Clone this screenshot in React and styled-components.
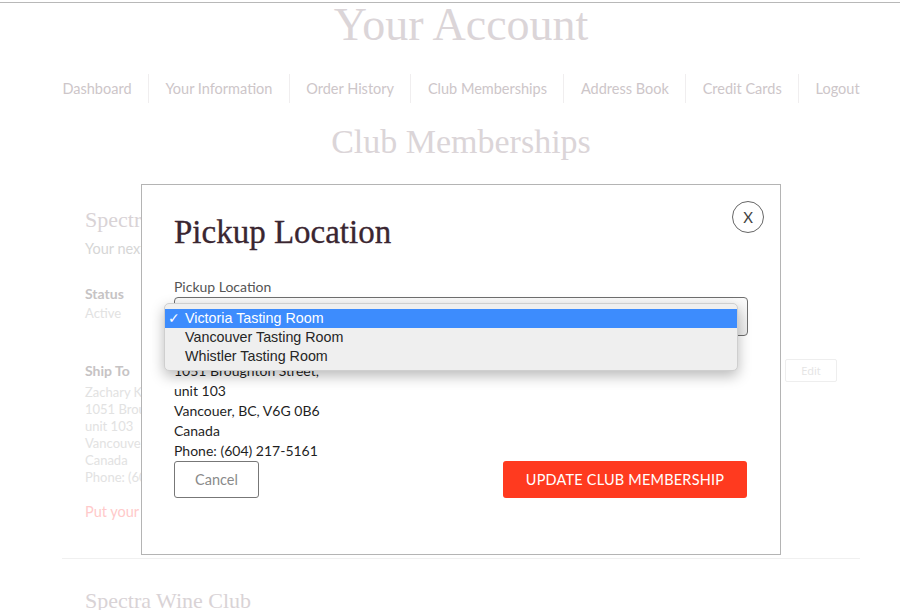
import React from "react";
import styled, { createGlobalStyle } from "styled-components";

const GlobalStyle = createGlobalStyle`
  html, body { margin: 0; padding: 0; background: #fff; }
  body { font-family: Lato, "Open Sans", sans-serif; }
  * { box-sizing: border-box; }
`;

const Page = styled.div`
  position: relative;
  width: 900px;
  height: 610px;
  overflow: hidden;
  padding-top: 2px;
`;

const TopRule = styled.div`
  height: 1px;
  background: #b8b8b8;
`;

const Container = styled.div`
  width: 798px;
  margin-left: 62px;
`;

const PageTitle = styled.h1`
  margin: 0;
  font-family: "Liberation Serif", serif;
  font-weight: 400;
  font-size: 46px;
  line-height: 44px;
  color: #dbd5d8;
  text-align: center;
`;

const Nav = styled.nav`
  display: flex;
  justify-content: space-between;
  margin-top: 27px;
  height: 29px;
`;

const NavItem = styled.a`
  display: flex;
  align-items: center;
  justify-content: center;
  flex: 1 1 auto;
  padding: 0 ${p => (p.$last ? "0" : "16px")} 0 ${p => (p.$first ? "0" : "16px")};
  border-left: ${p => (p.$first ? "none" : "1px solid #f0eeef")};
  font-size: 14.5px;
  color: #cdc6c9;
  white-space: nowrap;
`;

const SectionTitle = styled.h2`
  margin: 19px 0 0;
  font-family: "Liberation Serif", serif;
  font-weight: 400;
  font-size: 34px;
  line-height: 40px;
  color: #dbd5d8;
  text-align: center;
`;

const Card = styled.section`
  padding: ${p => p.$top ?? 45}px 23px 0;
`;

const ClubName = styled.h3`
  margin: 0;
  font-family: "Liberation Serif", serif;
  font-weight: 400;
  font-size: 22px;
  line-height: 26px;
  color: #d9d3d6;
`;

const Muted = styled.p`
  margin: ${p => p.$top ?? 6}px 0 0;
  font-size: 14.5px;
  line-height: 20px;
  color: ${p => p.$color || "#d6d6d6"};
`;

const InfoLabel = styled.div`
  margin-top: ${p => p.$top || 0}px;
  font-size: 14px;
  font-weight: 700;
  line-height: 20px;
  color: #c6c3c4;
`;

const InfoValue = styled.div`
  margin-top: ${p => p.$top || 0}px;
  font-size: 13px;
  line-height: 17px;
  color: #e2e2e2;
`;

const ShipRow = styled.div`
  display: flex;
  justify-content: space-between;
  align-items: flex-start;
  margin-top: 39px;
`;

const EditButton = styled.button`
  margin-top: -2px;
  width: 52px;
  height: 23px;
  border: 1px solid #eeeeee;
  border-radius: 2px;
  background: #fff;
  font-family: "Open Sans", sans-serif;
  font-size: 11px;
  color: #e4e4e4;
`;

const Divider = styled.hr`
  margin: 36px 0 0;
  border: 0;
  border-top: 1px solid #f0f0f0;
`;

/* ---------- Modal ---------- */

const Modal = styled.div`
  position: absolute;
  left: 141px;
  top: 184px;
  width: 640px;
  height: 371px;
  background: #fff;
  border: 1px solid #b4b4b4;
  padding: 27px 32px 0;
`;

const CloseButton = styled.button`
  position: absolute;
  top: 16px;
  right: 16px;
  width: 32px;
  height: 32px;
  border-radius: 50%;
  border: 1px solid #666;
  background: #fff;
  padding: 0;
  display: flex;
  align-items: center;
  justify-content: center;
  font-family: Lato, sans-serif;
  font-size: 15px;
  color: #444;
`;

const ModalTitle = styled.h2`
  margin: 0;
  font-family: "Liberation Serif", serif;
  font-weight: 400;
  font-size: 33px;
  line-height: 40px;
  color: #3a2631;
  -webkit-text-stroke: 0.3px #3a2631;
`;

const FieldLabel = styled.label`
  display: block;
  margin-top: 26px;
  font-size: 14px;
  line-height: 18px;
  color: #555;
`;

const FieldWrap = styled.div`
  position: relative;
  margin-top: 1px;
`;

const SelectBox = styled.div`
  height: 39px;
  border: 1px solid #6f6f6f;
  border-radius: 4px;
  background: linear-gradient(#fbfbfb, #ececec);
`;

const Popup = styled.ul`
  position: absolute;
  left: -10px;
  top: 6px;
  width: 574px;
  margin: 0;
  padding: 5px 0 4px;
  list-style: none;
  background: #efefef;
  border: 1px solid #cfcfcf;
  border-radius: 5px;
  box-shadow: 0 5px 14px rgba(0, 0, 0, 0.28);
  z-index: 2;
`;

const Option = styled.li`
  position: relative;
  height: 19px;
  padding-left: 20px;
  font-family: "Liberation Sans", Arial, sans-serif;
  font-size: 14.3px;
  line-height: 19px;
  color: ${p => (p.$selected ? "#fff" : "#262626")};
  background: ${p => (p.$selected ? "#3d8cfd" : "transparent")};
`;

const Check = styled.span`
  position: absolute;
  left: 3px;
  top: 0;
  font-family: "DejaVu Sans", sans-serif;
  font-size: 14px;
  font-weight: 700;
`;

const Address = styled.div`
  margin-top: 25px;
  font-size: 14px;
  line-height: 20px;
  color: #1f1f1f;
`;

const ButtonRow = styled.div`
  display: flex;
  justify-content: space-between;
  padding-right: 1px;
`;

const CancelButton = styled.button`
  width: 85px;
  height: 37px;
  border: 1px solid #777;
  border-radius: 3px;
  background: #fff;
  font-family: Lato, sans-serif;
  font-size: 14.5px;
  color: #8a8a8a;
`;

const PrimaryButton = styled.button`
  width: 244px;
  height: 37px;
  border: 0;
  border-radius: 3px;
  background: #ff3a1f;
  font-family: Lato, sans-serif;
  font-size: 14.5px;
  letter-spacing: 0.2px;
  color: #fff;
  text-transform: uppercase;
`;

const navItems = [
  "Dashboard",
  "Your Information",
  "Order History",
  "Club Memberships",
  "Address Book",
  "Credit Cards",
  "Logout",
];

const locations = ["Victoria Tasting Room", "Vancouver Tasting Room", "Whistler Tasting Room"];

export default function App() {
  return (
    <>
      <GlobalStyle />
      <Page>
        <TopRule />
        <Container>
          <PageTitle>Your Account</PageTitle>
          <Nav>
            {navItems.map((n, i) => (
              <NavItem key={n} $first={i === 0} $last={i === navItems.length - 1}>
                {n}
              </NavItem>
            ))}
          </Nav>
          <SectionTitle>Club Memberships</SectionTitle>
          <Card>
            <ClubName>Spectra Wine Club</ClubName>
            <Muted>Your next shipment is scheduled soon.</Muted>
            <InfoLabel $top={25}>Status</InfoLabel>
            <InfoValue $top={1}>Active</InfoValue>
            <ShipRow>
              <div>
                <InfoLabel>Ship To</InfoLabel>
                <InfoValue $top={3}>Zachary Kingston</InfoValue>
                <InfoValue>1051 Broughton Street,</InfoValue>
                <InfoValue>unit 103</InfoValue>
                <InfoValue>Vancouver, BC, V6G 0B6</InfoValue>
                <InfoValue>Canada</InfoValue>
                <InfoValue>Phone: (604) 217-5161</InfoValue>
                <Muted $color="#ffcaca" $top={16}>
                  Put your club membership on hold
                </Muted>
              </div>
              <EditButton>Edit</EditButton>
            </ShipRow>
          </Card>
          <Divider />
          <Card $top={29}>
            <ClubName>Spectra Wine Club</ClubName>
          </Card>
        </Container>

        <Modal>
          <CloseButton>X</CloseButton>
          <ModalTitle>Pickup Location</ModalTitle>
          <FieldLabel>Pickup Location</FieldLabel>
          <FieldWrap>
            <SelectBox />
            <Popup>
              {locations.map((l, i) => (
                <Option key={l} $selected={i === 0}>
                  {i === 0 && <Check>✓</Check>}
                  {l}
                </Option>
              ))}
            </Popup>
          </FieldWrap>
          <Address>
            <div>1051 Broughton Street,</div>
            <div>unit 103</div>
            <div>Vancouer, BC, V6G 0B6</div>
            <div>Canada</div>
            <div>Phone: (604) 217-5161</div>
          </Address>
          <ButtonRow>
            <CancelButton>Cancel</CancelButton>
            <PrimaryButton>Update Club Membership</PrimaryButton>
          </ButtonRow>
        </Modal>
      </Page>
    </>
  );
}
